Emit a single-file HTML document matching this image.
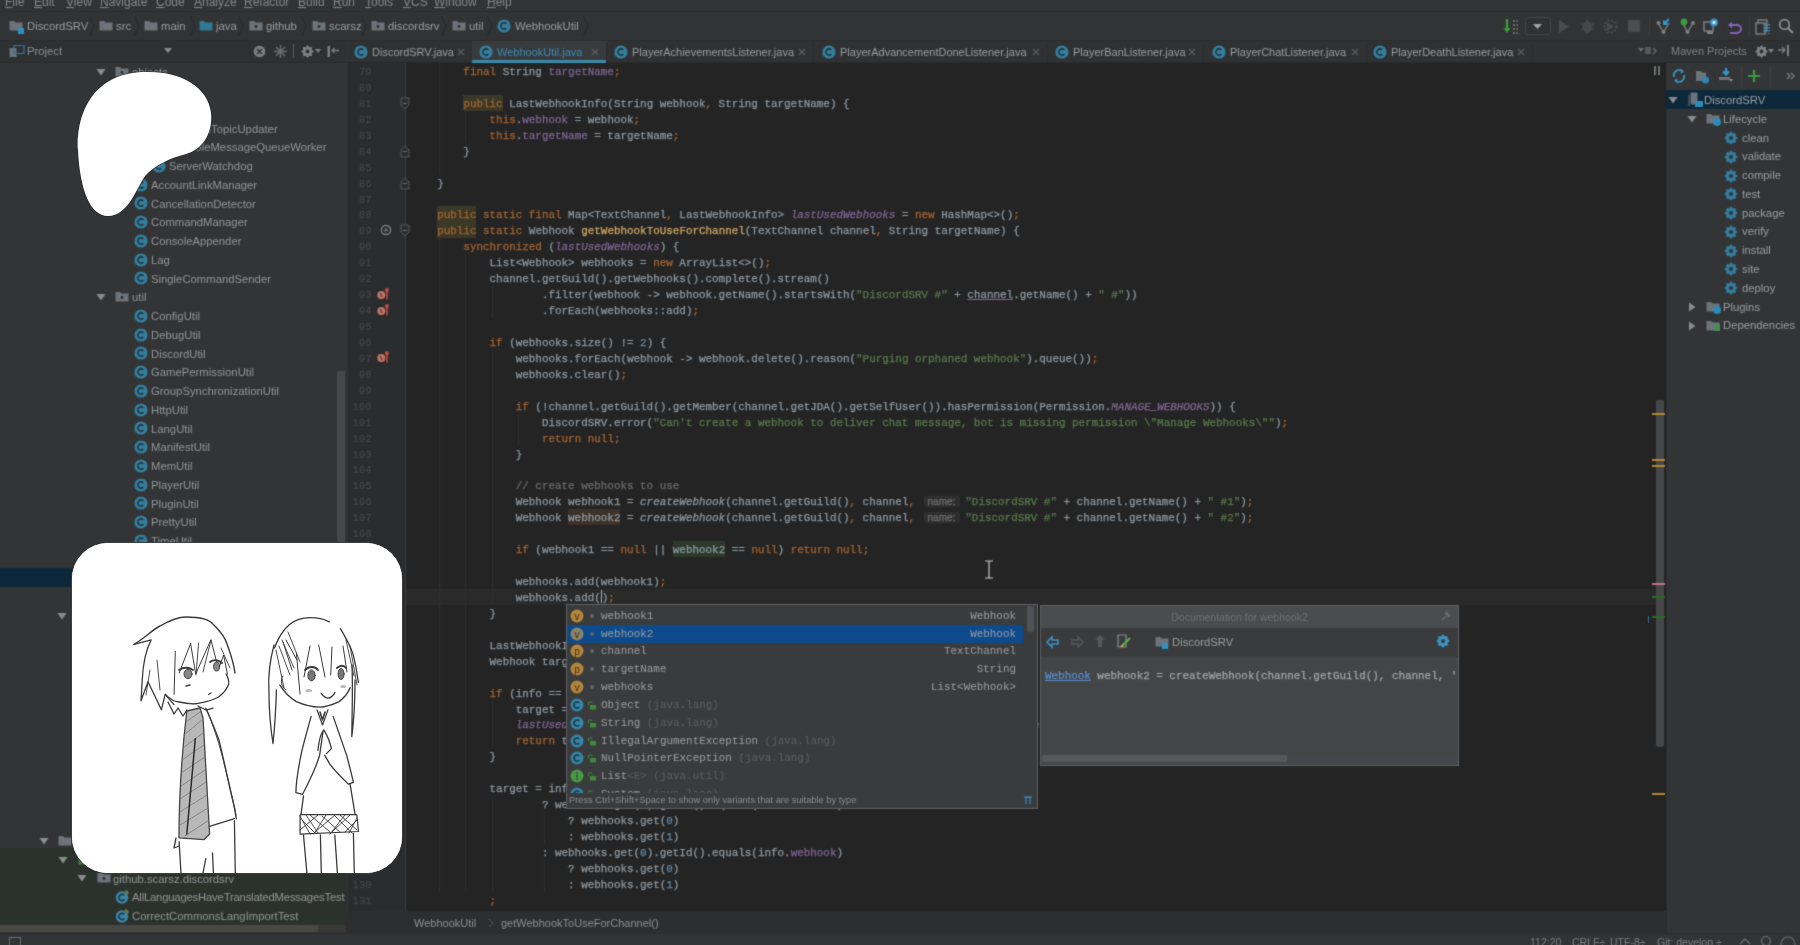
<!DOCTYPE html><html><head><meta charset="utf-8"><style>
*{margin:0;padding:0;box-sizing:border-box}
html,body{width:1800px;height:945px;overflow:hidden;background:#313335;font-family:"Liberation Sans",sans-serif;position:relative}
div,span.abs,.ic{position:absolute}
#root{position:absolute;left:0;top:0;width:1800px;height:945px;overflow:hidden;filter:url(#bl)}
#menubar{left:0;top:0;width:1800px;height:12px;background:#313335;border-bottom:1px solid #282a2b;overflow:hidden}
.mi{position:absolute;top:-5px;font-size:12px;color:#84878a;white-space:pre}
#nav{left:0;top:12px;width:1800px;height:29px;background:#313335;border-bottom:1px solid #2a2c2d}
.nt{position:absolute;top:7px;font-size:11.3px;color:#9a9da0;white-space:pre}
#projhdr{left:0;top:41px;width:346px;height:22px;background:#2e3032;border-bottom:1px solid #282a2c}
#project{left:0;top:63px;width:346px;height:870px;background:#323436;overflow:hidden}
.tr{position:absolute;font-size:11.3px;color:#9b9ea1;white-space:pre;height:19px;line-height:19px}
#tabs{left:347px;top:41px;width:1319px;height:22px;background:#2f3133;border-bottom:1px solid #27292a}
.tab{position:absolute;top:0;height:22px;font-size:11px;color:#9a9da0;white-space:pre;line-height:22px}
#gutter{left:346px;top:63px;width:61px;height:848px;background:#2b2c2e;border-left:2px solid #2f3133}
#editor{left:406px;top:63px;width:1260px;height:848px;background:#242424}
#caretrow{left:406px;top:589px;width:1250px;height:16px;background:#2a2a2a}
.ln{position:absolute;left:346px;width:25.5px;text-align:right;font-family:"Liberation Mono",monospace;font-size:10.5px;color:#46484a;height:16px;line-height:19px}
.cl{-webkit-text-stroke:0.25px currentColor;position:absolute;left:411px;font-family:"Liberation Mono",monospace;font-size:10.92px;color:#909aa2;white-space:pre;height:16px;line-height:18px}
.k{color:#a66530}
.f{color:#7f6595}
.fi{color:#7f6595;font-style:italic}
.m{color:#d3aa63}
.s{color:#597a4c}
.n{color:#5e89ab}
.c{color:#6b6b6b}
.it{font-style:italic}
.hl{background:#3a3826;display:inline-block;height:16px;vertical-align:top}
.hw{background:#3e3129;display:inline-block;height:16px;vertical-align:top}
.hr{background:#2c3a2c;display:inline-block;height:16px;vertical-align:top}
.u{text-decoration:underline;text-decoration-color:#8a5fa8}
.hint{background:#2f2f2f;color:#6b6d6f;font-family:"Liberation Sans",sans-serif;font-size:10px;padding:0 5px 0 4px;margin:0 5px 0 2px;border-radius:2px}
.caret{display:inline-block;width:1px;height:13px;background:#b0b0b0;vertical-align:-2px}
#brc{left:346px;top:911px;width:1320px;height:22px;background:#2c2e30}
#status{left:0;top:933px;width:1800px;height:12px;background:#313335;border-top:1px solid #2a2c2d}
#maven{left:1666px;top:41px;width:134px;height:892px;background:#323436;border-left:1px solid #2a2c2d}

.pt{position:absolute;font-family:"Liberation Mono",monospace;font-size:10.92px;color:#9d9fa1;white-space:pre;height:18px;line-height:19px}
.foot{position:absolute;font-size:9.3px;color:#8a8c8e;white-space:pre;line-height:13px}
.dt{position:absolute;font-size:11px;color:#6c6f72;white-space:pre;line-height:22px;height:22px}

</style></head><body><svg width="0" height="0" style="position:absolute"><filter id="bl" x="0" y="0" width="100%" height="100%" color-interpolation-filters="sRGB"><feConvolveMatrix order="3" kernelMatrix="1 4 1 4 16 4 1 4 1" divisor="36" edgeMode="duplicate"/></filter></svg><div id="root">
<div id="menubar">
<span class="mi" style="left:5px"><u>F</u>ile</span>
<span class="mi" style="left:34px"><u>E</u>dit</span>
<span class="mi" style="left:66px"><u>V</u>iew</span>
<span class="mi" style="left:100px"><u>N</u>avigate</span>
<span class="mi" style="left:156px"><u>C</u>ode</span>
<span class="mi" style="left:194px"><u>A</u>nalyze</span>
<span class="mi" style="left:244px"><u>R</u>efactor</span>
<span class="mi" style="left:298px"><u>B</u>uild</span>
<span class="mi" style="left:333px"><u>R</u>un</span>
<span class="mi" style="left:365px"><u>T</u>ools</span>
<span class="mi" style="left:403px"><u>V</u>CS</span>
<span class="mi" style="left:434px"><u>W</u>indow</span>
<span class="mi" style="left:487px"><u>H</u>elp</span>
</div>
<div id="nav"></div>
<span class="nt" style="left:27px;top:20px">DiscordSRV</span>
<svg class="ic" style="left:9px;top:20px" width="14" height="11" viewBox="0 0 14 11"><path d="M0.5,1 L5,1 L6.5,2.5 L13.5,2.5 L13.5,10.5 L0.5,10.5 Z" fill="#6d737a"/></svg>
<div style="left:18px;top:28px;width:6px;height:6px;background:#2e8fc0"></div>
<svg class="ic" style="left:89px;top:15px" width="6" height="22"><path d="M0.5,1 L5,11 L0.5,21" fill="none" stroke="#27292b" stroke-width="1"/></svg>
<span class="nt" style="left:116px;top:20px">src</span>
<svg class="ic" style="left:99px;top:20px" width="14" height="11" viewBox="0 0 14 11"><path d="M0.5,1 L5,1 L6.5,2.5 L13.5,2.5 L13.5,10.5 L0.5,10.5 Z" fill="#6d737a"/></svg>
<svg class="ic" style="left:134px;top:15px" width="6" height="22"><path d="M0.5,1 L5,11 L0.5,21" fill="none" stroke="#27292b" stroke-width="1"/></svg>
<span class="nt" style="left:161px;top:20px">main</span>
<svg class="ic" style="left:144px;top:20px" width="14" height="11" viewBox="0 0 14 11"><path d="M0.5,1 L5,1 L6.5,2.5 L13.5,2.5 L13.5,10.5 L0.5,10.5 Z" fill="#6d737a"/></svg>
<svg class="ic" style="left:190px;top:15px" width="6" height="22"><path d="M0.5,1 L5,11 L0.5,21" fill="none" stroke="#27292b" stroke-width="1"/></svg>
<span class="nt" style="left:216px;top:20px">java</span>
<svg class="ic" style="left:199px;top:20px" width="14" height="11" viewBox="0 0 14 11"><path d="M0.5,1 L5,1 L6.5,2.5 L13.5,2.5 L13.5,10.5 L0.5,10.5 Z" fill="#2f7896"/></svg>
<svg class="ic" style="left:238px;top:15px" width="6" height="22"><path d="M0.5,1 L5,11 L0.5,21" fill="none" stroke="#27292b" stroke-width="1"/></svg>
<span class="nt" style="left:266px;top:20px">github</span>
<svg class="ic" style="left:249px;top:20px" width="14" height="11" viewBox="0 0 14 11"><path d="M0.5,1 L5,1 L6.5,2.5 L13.5,2.5 L13.5,10.5 L0.5,10.5 Z" fill="#6d737a"/><circle cx="7" cy="6.5" r="1.4" fill="#2a2c2e"/></svg>
<svg class="ic" style="left:301px;top:15px" width="6" height="22"><path d="M0.5,1 L5,11 L0.5,21" fill="none" stroke="#27292b" stroke-width="1"/></svg>
<span class="nt" style="left:329px;top:20px">scarsz</span>
<svg class="ic" style="left:312px;top:20px" width="14" height="11" viewBox="0 0 14 11"><path d="M0.5,1 L5,1 L6.5,2.5 L13.5,2.5 L13.5,10.5 L0.5,10.5 Z" fill="#6d737a"/><circle cx="7" cy="6.5" r="1.4" fill="#2a2c2e"/></svg>
<svg class="ic" style="left:361px;top:15px" width="6" height="22"><path d="M0.5,1 L5,11 L0.5,21" fill="none" stroke="#27292b" stroke-width="1"/></svg>
<span class="nt" style="left:388px;top:20px">discordsrv</span>
<svg class="ic" style="left:371px;top:20px" width="14" height="11" viewBox="0 0 14 11"><path d="M0.5,1 L5,1 L6.5,2.5 L13.5,2.5 L13.5,10.5 L0.5,10.5 Z" fill="#6d737a"/><circle cx="7" cy="6.5" r="1.4" fill="#2a2c2e"/></svg>
<svg class="ic" style="left:441px;top:15px" width="6" height="22"><path d="M0.5,1 L5,11 L0.5,21" fill="none" stroke="#27292b" stroke-width="1"/></svg>
<span class="nt" style="left:469px;top:20px">util</span>
<svg class="ic" style="left:452px;top:20px" width="14" height="11" viewBox="0 0 14 11"><path d="M0.5,1 L5,1 L6.5,2.5 L13.5,2.5 L13.5,10.5 L0.5,10.5 Z" fill="#6d737a"/><circle cx="7" cy="6.5" r="1.4" fill="#2a2c2e"/></svg>
<svg class="ic" style="left:487px;top:15px" width="6" height="22"><path d="M0.5,1 L5,11 L0.5,21" fill="none" stroke="#27292b" stroke-width="1"/></svg>
<span class="nt" style="left:515px;top:20px">WebhookUtil</span>
<svg class="ic" style="left:497px;top:19px" width="14" height="14" viewBox="0 0 14 14"><circle cx="7" cy="7" r="6.6" fill="#347e9d"/><path d="M9.3,4.9 A3.1,3.1 0 1 0 9.3,9.1" fill="none" stroke="#22353f" stroke-width="1.6"/></svg>
<svg class="ic" style="left:583px;top:15px" width="6" height="22"><path d="M0.5,1 L5,11 L0.5,21" fill="none" stroke="#27292b" stroke-width="1"/></svg>
<svg class="ic" style="left:1503px;top:18px" width="16" height="17" viewBox="0 0 16 17"><path d="M4,1 L4,11" stroke="#3e9a3e" stroke-width="2.4"/><path d="M0.5,10 L4,15 L7.5,10Z" fill="#3e9a3e"/><path d="M10,3 L15,3 M10,7 L15,7 M10,11 L15,11 M10,15 L15,15" stroke="#7d8083" stroke-width="1.5" stroke-dasharray="2 1.5"/></svg>
<div style="left:1525px;top:17px;width:26px;height:18px;border:1px solid #434548;border-radius:3px;background:#2f3133"></div>
<svg class="ic" style="left:1533px;top:24px" width="9" height="6" viewBox="0 0 9 6"><path d="M0,0 L9,0 L4.5,5Z" fill="#a0a3a6"/></svg>
<svg class="ic" style="left:1558px;top:19px" width="12" height="15" viewBox="0 0 12 15"><path d="M1,1 L11,7.5 L1,14Z" fill="#4a4c4e"/></svg>
<svg class="ic" style="left:1580px;top:19px" width="15" height="15" viewBox="0 0 15 15"><ellipse cx="7.5" cy="8" rx="4.5" ry="6" fill="#47494b"/><path d="M1,5 L14,11 M14,5 L1,11 M7.5,1 L7.5,15" stroke="#47494b" stroke-width="1.4"/></svg>
<svg class="ic" style="left:1603px;top:19px" width="15" height="15" viewBox="0 0 15 15"><circle cx="7.5" cy="7.5" r="6" fill="none" stroke="#47494b" stroke-width="2.5" stroke-dasharray="2 1.5"/><path d="M4,3 L11,7.5 L4,12Z" fill="#47494b"/></svg>
<div style="left:1628px;top:20px;width:12px;height:12px;background:#4a4c4e"></div>
<div style="left:1649px;top:16px;width:1px;height:20px;background:#3c3e40"></div>
<svg class="ic" style="left:1656px;top:18px" width="15" height="17" viewBox="0 0 15 17"><path d="M2,5 L7.5,14 L13,5" fill="none" stroke="#7d8083" stroke-width="1.4"/><circle cx="2.5" cy="5" r="2" fill="#7d8083"/><circle cx="7.5" cy="14" r="2" fill="#7d8083"/><path d="M13,1 L8,6 M8,2.5 L8,6 L11.5,6" fill="none" stroke="#2f9bd0" stroke-width="2"/></svg>
<svg class="ic" style="left:1680px;top:18px" width="15" height="17" viewBox="0 0 15 17"><path d="M2.5,5 L7.5,14 L13,5" fill="none" stroke="#7d8083" stroke-width="1.4"/><circle cx="13" cy="5" r="2" fill="#7d8083"/><circle cx="7.5" cy="14" r="2" fill="#7d8083"/><circle cx="4" cy="4" r="3.4" fill="#3e9a3e"/></svg>
<svg class="ic" style="left:1703px;top:18px" width="15" height="17" viewBox="0 0 15 17"><rect x="1" y="4" width="9" height="9" fill="none" stroke="#7d8083" stroke-width="1.5"/><rect x="4" y="13" width="6" height="3" fill="#7d8083"/><circle cx="11" cy="4.5" r="4" fill="#3d92c4"/><rect x="9.5" y="3" width="3" height="3" fill="#cfe3f0"/></svg>
<svg class="ic" style="left:1727px;top:18px" width="16" height="17" viewBox="0 0 16 17"><path d="M3,7 L10,7 A4,4 0 0 1 10,15 L3,15" fill="none" stroke="#8a5fb8" stroke-width="2"/><path d="M1,7 L5,3.5 L5,10.5Z" fill="#8a5fb8"/></svg>
<div style="left:1749px;top:16px;width:1px;height:20px;background:#3c3e40"></div>
<svg class="ic" style="left:1755px;top:18px" width="16" height="17" viewBox="0 0 16 17"><rect x="3" y="2" width="9" height="11" fill="none" stroke="#7d8083" stroke-width="1.4"/><rect x="1" y="5" width="9" height="11" fill="#2f3133" stroke="#7d8083" stroke-width="1.4"/><path d="M8,7 L15,7 M8,10 L15,10 M8,13 L15,13 M11,6 L11,16 M14,6 L14,16" stroke="#2f9bd0" stroke-width="1.2" stroke-dasharray="1.5 1.5"/></svg>
<svg class="ic" style="left:1778px;top:18px" width="16" height="17" viewBox="0 0 16 17"><circle cx="6.5" cy="6.5" r="4.8" fill="none" stroke="#8a8d90" stroke-width="1.8"/><path d="M10,10 L15,15" stroke="#8a8d90" stroke-width="2.2"/></svg>
<div id="projhdr"></div>
<span class="tr" style="left:27px;top:42px;color:#8d9093">Project</span>
<svg class="ic" style="left:9px;top:45px" width="16" height="13" viewBox="0 0 16 13"><rect x="0.5" y="3" width="7" height="9" fill="#6d737a"/><rect x="5" y="0.5" width="10" height="8" fill="none" stroke="#2f7896" stroke-width="1.2"/></svg>
<svg class="ic" style="left:164px;top:48px" width="8" height="5" viewBox="0 0 8 5"><path d="M0,0 L8,0 L4,5Z" fill="#8a8c8e"/></svg>
<svg class="ic" style="left:253px;top:45px" width="13" height="13" viewBox="0 0 13 13"><circle cx="6.5" cy="6.5" r="5.8" fill="#7d8083"/><path d="M4,4 L9,9 M9,4 L4,9" stroke="#2e3032" stroke-width="1.6"/></svg>
<svg class="ic" style="left:274px;top:45px" width="13" height="13" viewBox="0 0 13 13"><path d="M6.5,0 L6.5,13 M0,6.5 L13,6.5 M2,2 L11,11 M11,2 L2,11" stroke="#6d7073" stroke-width="1.4"/></svg>
<div style="left:293px;top:44px;width:1px;height:14px;background:#5a5d60"></div>
<svg class="ic" style="left:300.5px;top:44.5px" width="13.0" height="13.0" viewBox="0 0 13.0 13.0"><polygon points="12.00,6.50 10.16,8.02 10.39,10.39 8.02,10.16 6.50,12.00 4.98,10.16 2.61,10.39 2.84,8.02 1.00,6.50 2.84,4.98 2.61,2.61 4.98,2.84 6.50,1.00 8.02,2.84 10.39,2.61 10.16,4.98" fill="#7d8083" stroke="#7d8083" stroke-width="1.2" stroke-linejoin="round"/><circle cx="6.5" cy="6.5" r="1.92" fill="#2e3032"/></svg>
<svg class="ic" style="left:315px;top:49px" width="6" height="5" viewBox="0 0 6 5"><path d="M0,0 L6,0 L3,4Z" fill="#7d8083"/></svg>
<svg class="ic" style="left:327px;top:45px" width="13" height="13" viewBox="0 0 13 13"><rect x="0.5" y="1" width="2.5" height="11" fill="#7d8083"/><path d="M5,5.5 L12,5.5" stroke="#7d8083" stroke-width="1.5"/><path d="M5,5.5 L7.5,3 M5,5.5 L7.5,8" stroke="#7d8083" stroke-width="1.2"/></svg>
<div id="project"></div>
<div style="left:0;top:568px;width:346px;height:19px;background:#0d283b"></div>
<div style="left:0;top:848px;width:346px;height:77px;background:#2b322c"></div>
<div style="left:0;top:925px;width:346px;height:7px;background:#4a4844"></div>
<div style="left:318px;top:925px;width:28px;height:7px;background:#3a3936"></div>
<div style="left:337px;top:371px;width:8px;height:175px;background:#45474a"></div>
<svg class="ic" style="left:96px;top:68.0px" width="10" height="8" viewBox="0 0 10 8"><path d="M0.5,1 L9.5,1 L5,7.5 Z" fill="#8a8c8e"/></svg>
<svg class="ic" style="left:115px;top:66.0px" width="14" height="11" viewBox="0 0 14 11"><path d="M0.5,1 L5,1 L6.5,2.5 L13.5,2.5 L13.5,10.5 L0.5,10.5 Z" fill="#6d737a"/><circle cx="7" cy="6.5" r="1.4" fill="#2a2c2e"/></svg>
<span class="tr" style="left:132px;top:63.3px;color:#929598">objects</span>
<svg class="ic" style="left:116px;top:86.75px" width="10" height="8" viewBox="0 0 10 8"><path d="M0.5,1 L9.5,1 L5,7.5 Z" fill="#8a8c8e"/></svg>
<svg class="ic" style="left:134px;top:84.75px" width="14" height="11" viewBox="0 0 14 11"><path d="M0.5,1 L5,1 L6.5,2.5 L13.5,2.5 L13.5,10.5 L0.5,10.5 Z" fill="#6d737a"/><circle cx="7" cy="6.5" r="1.4" fill="#2a2c2e"/></svg>
<span class="tr" style="left:150px;top:82.0px;color:#929598">threads</span>
<svg class="ic" style="left:152px;top:102.5px" width="14" height="14" viewBox="0 0 14 14"><circle cx="7" cy="7" r="6.6" fill="#347e9d"/><path d="M9.3,4.9 A3.1,3.1 0 1 0 9.3,9.1" fill="none" stroke="#22353f" stroke-width="1.6"/></svg>
<svg class="ic" style="left:152px;top:121.25px" width="14" height="14" viewBox="0 0 14 14"><circle cx="7" cy="7" r="6.6" fill="#347e9d"/><path d="M9.3,4.9 A3.1,3.1 0 1 0 9.3,9.1" fill="none" stroke="#22353f" stroke-width="1.6"/></svg>
<span class="tr" style="left:169px;top:119.5px;color:#929598">ChannelTopicUpdater</span>
<svg class="ic" style="left:152px;top:140.0px" width="14" height="14" viewBox="0 0 14 14"><circle cx="7" cy="7" r="6.6" fill="#347e9d"/><path d="M9.3,4.9 A3.1,3.1 0 1 0 9.3,9.1" fill="none" stroke="#22353f" stroke-width="1.6"/></svg>
<span class="tr" style="left:169px;top:138.3px;color:#929598">ConsoleMessageQueueWorker</span>
<svg class="ic" style="left:152px;top:158.75px" width="14" height="14" viewBox="0 0 14 14"><circle cx="7" cy="7" r="6.6" fill="#347e9d"/><path d="M9.3,4.9 A3.1,3.1 0 1 0 9.3,9.1" fill="none" stroke="#22353f" stroke-width="1.6"/></svg>
<span class="tr" style="left:169px;top:157.1px;color:#929598">ServerWatchdog</span>
<svg class="ic" style="left:134px;top:177.5px" width="14" height="14" viewBox="0 0 14 14"><circle cx="7" cy="7" r="6.6" fill="#347e9d"/><path d="M9.3,4.9 A3.1,3.1 0 1 0 9.3,9.1" fill="none" stroke="#22353f" stroke-width="1.6"/></svg>
<span class="tr" style="left:151px;top:175.8px;color:#929598">AccountLinkManager</span>
<svg class="ic" style="left:134px;top:196.25px" width="14" height="14" viewBox="0 0 14 14"><circle cx="7" cy="7" r="6.6" fill="#347e9d"/><path d="M9.3,4.9 A3.1,3.1 0 1 0 9.3,9.1" fill="none" stroke="#22353f" stroke-width="1.6"/></svg>
<span class="tr" style="left:151px;top:194.6px;color:#929598">CancellationDetector</span>
<svg class="ic" style="left:134px;top:215.0px" width="14" height="14" viewBox="0 0 14 14"><circle cx="7" cy="7" r="6.6" fill="#347e9d"/><path d="M9.3,4.9 A3.1,3.1 0 1 0 9.3,9.1" fill="none" stroke="#22353f" stroke-width="1.6"/></svg>
<span class="tr" style="left:151px;top:213.3px;color:#929598">CommandManager</span>
<svg class="ic" style="left:134px;top:233.75px" width="14" height="14" viewBox="0 0 14 14"><circle cx="7" cy="7" r="6.6" fill="#347e9d"/><path d="M9.3,4.9 A3.1,3.1 0 1 0 9.3,9.1" fill="none" stroke="#22353f" stroke-width="1.6"/></svg>
<span class="tr" style="left:151px;top:232.1px;color:#929598">ConsoleAppender</span>
<svg class="ic" style="left:134px;top:252.5px" width="14" height="14" viewBox="0 0 14 14"><circle cx="7" cy="7" r="6.6" fill="#347e9d"/><path d="M9.3,4.9 A3.1,3.1 0 1 0 9.3,9.1" fill="none" stroke="#22353f" stroke-width="1.6"/></svg>
<span class="tr" style="left:151px;top:250.8px;color:#929598">Lag</span>
<svg class="ic" style="left:134px;top:271.25px" width="14" height="14" viewBox="0 0 14 14"><circle cx="7" cy="7" r="6.6" fill="#347e9d"/><path d="M9.3,4.9 A3.1,3.1 0 1 0 9.3,9.1" fill="none" stroke="#22353f" stroke-width="1.6"/></svg>
<span class="tr" style="left:151px;top:269.6px;color:#929598">SingleCommandSender</span>
<svg class="ic" style="left:96px;top:293.0px" width="10" height="8" viewBox="0 0 10 8"><path d="M0.5,1 L9.5,1 L5,7.5 Z" fill="#8a8c8e"/></svg>
<svg class="ic" style="left:115px;top:291.0px" width="14" height="11" viewBox="0 0 14 11"><path d="M0.5,1 L5,1 L6.5,2.5 L13.5,2.5 L13.5,10.5 L0.5,10.5 Z" fill="#6d737a"/><circle cx="7" cy="6.5" r="1.4" fill="#2a2c2e"/></svg>
<span class="tr" style="left:132px;top:288.3px;color:#929598">util</span>
<svg class="ic" style="left:134px;top:308.75px" width="14" height="14" viewBox="0 0 14 14"><circle cx="7" cy="7" r="6.6" fill="#347e9d"/><path d="M9.3,4.9 A3.1,3.1 0 1 0 9.3,9.1" fill="none" stroke="#22353f" stroke-width="1.6"/></svg>
<span class="tr" style="left:151px;top:307.1px;color:#929598">ConfigUtil</span>
<svg class="ic" style="left:134px;top:327.5px" width="14" height="14" viewBox="0 0 14 14"><circle cx="7" cy="7" r="6.6" fill="#347e9d"/><path d="M9.3,4.9 A3.1,3.1 0 1 0 9.3,9.1" fill="none" stroke="#22353f" stroke-width="1.6"/></svg>
<span class="tr" style="left:151px;top:325.8px;color:#929598">DebugUtil</span>
<svg class="ic" style="left:134px;top:346.25px" width="14" height="14" viewBox="0 0 14 14"><circle cx="7" cy="7" r="6.6" fill="#347e9d"/><path d="M9.3,4.9 A3.1,3.1 0 1 0 9.3,9.1" fill="none" stroke="#22353f" stroke-width="1.6"/></svg>
<span class="tr" style="left:151px;top:344.6px;color:#929598">DiscordUtil</span>
<svg class="ic" style="left:134px;top:365.0px" width="14" height="14" viewBox="0 0 14 14"><circle cx="7" cy="7" r="6.6" fill="#347e9d"/><path d="M9.3,4.9 A3.1,3.1 0 1 0 9.3,9.1" fill="none" stroke="#22353f" stroke-width="1.6"/></svg>
<span class="tr" style="left:151px;top:363.3px;color:#929598">GamePermissionUtil</span>
<svg class="ic" style="left:134px;top:383.75px" width="14" height="14" viewBox="0 0 14 14"><circle cx="7" cy="7" r="6.6" fill="#347e9d"/><path d="M9.3,4.9 A3.1,3.1 0 1 0 9.3,9.1" fill="none" stroke="#22353f" stroke-width="1.6"/></svg>
<span class="tr" style="left:151px;top:382.1px;color:#929598">GroupSynchronizationUtil</span>
<svg class="ic" style="left:134px;top:402.5px" width="14" height="14" viewBox="0 0 14 14"><circle cx="7" cy="7" r="6.6" fill="#347e9d"/><path d="M9.3,4.9 A3.1,3.1 0 1 0 9.3,9.1" fill="none" stroke="#22353f" stroke-width="1.6"/></svg>
<span class="tr" style="left:151px;top:400.8px;color:#929598">HttpUtil</span>
<svg class="ic" style="left:134px;top:421.25px" width="14" height="14" viewBox="0 0 14 14"><circle cx="7" cy="7" r="6.6" fill="#347e9d"/><path d="M9.3,4.9 A3.1,3.1 0 1 0 9.3,9.1" fill="none" stroke="#22353f" stroke-width="1.6"/></svg>
<span class="tr" style="left:151px;top:419.6px;color:#929598">LangUtil</span>
<svg class="ic" style="left:134px;top:440.0px" width="14" height="14" viewBox="0 0 14 14"><circle cx="7" cy="7" r="6.6" fill="#347e9d"/><path d="M9.3,4.9 A3.1,3.1 0 1 0 9.3,9.1" fill="none" stroke="#22353f" stroke-width="1.6"/></svg>
<span class="tr" style="left:151px;top:438.3px;color:#929598">ManifestUtil</span>
<svg class="ic" style="left:134px;top:458.75px" width="14" height="14" viewBox="0 0 14 14"><circle cx="7" cy="7" r="6.6" fill="#347e9d"/><path d="M9.3,4.9 A3.1,3.1 0 1 0 9.3,9.1" fill="none" stroke="#22353f" stroke-width="1.6"/></svg>
<span class="tr" style="left:151px;top:457.1px;color:#929598">MemUtil</span>
<svg class="ic" style="left:134px;top:477.5px" width="14" height="14" viewBox="0 0 14 14"><circle cx="7" cy="7" r="6.6" fill="#347e9d"/><path d="M9.3,4.9 A3.1,3.1 0 1 0 9.3,9.1" fill="none" stroke="#22353f" stroke-width="1.6"/></svg>
<span class="tr" style="left:151px;top:475.8px;color:#929598">PlayerUtil</span>
<svg class="ic" style="left:134px;top:496.25px" width="14" height="14" viewBox="0 0 14 14"><circle cx="7" cy="7" r="6.6" fill="#347e9d"/><path d="M9.3,4.9 A3.1,3.1 0 1 0 9.3,9.1" fill="none" stroke="#22353f" stroke-width="1.6"/></svg>
<span class="tr" style="left:151px;top:494.6px;color:#929598">PluginUtil</span>
<svg class="ic" style="left:134px;top:515.0px" width="14" height="14" viewBox="0 0 14 14"><circle cx="7" cy="7" r="6.6" fill="#347e9d"/><path d="M9.3,4.9 A3.1,3.1 0 1 0 9.3,9.1" fill="none" stroke="#22353f" stroke-width="1.6"/></svg>
<span class="tr" style="left:151px;top:513.3px;color:#929598">PrettyUtil</span>
<svg class="ic" style="left:134px;top:533.75px" width="14" height="14" viewBox="0 0 14 14"><circle cx="7" cy="7" r="6.6" fill="#347e9d"/><path d="M9.3,4.9 A3.1,3.1 0 1 0 9.3,9.1" fill="none" stroke="#22353f" stroke-width="1.6"/></svg>
<span class="tr" style="left:151px;top:532.0px;color:#929598">TimeUtil</span>
<svg class="ic" style="left:134px;top:552.5px" width="14" height="14" viewBox="0 0 14 14"><circle cx="7" cy="7" r="6.6" fill="#347e9d"/><path d="M9.3,4.9 A3.1,3.1 0 1 0 9.3,9.1" fill="none" stroke="#22353f" stroke-width="1.6"/></svg>
<span class="tr" style="left:151px;top:550.8px;color:#929598">UpdateUtil</span>
<svg class="ic" style="left:134px;top:571.25px" width="14" height="14" viewBox="0 0 14 14"><circle cx="7" cy="7" r="6.6" fill="#347e9d"/><path d="M9.3,4.9 A3.1,3.1 0 1 0 9.3,9.1" fill="none" stroke="#22353f" stroke-width="1.6"/></svg>
<span class="tr" style="left:151px;top:569.5px;color:#929598">WebhookUtil</span>
<svg class="ic" style="left:115px;top:590.0px" width="14" height="14" viewBox="0 0 14 14"><circle cx="7" cy="7" r="6.6" fill="#347e9d"/><path d="M9.3,4.9 A3.1,3.1 0 1 0 9.3,9.1" fill="none" stroke="#22353f" stroke-width="1.6"/></svg>
<span class="tr" style="left:132px;top:588.3px;color:#929598">DiscordSRV</span>
<svg class="ic" style="left:57px;top:611.75px" width="10" height="8" viewBox="0 0 10 8"><path d="M0.5,1 L9.5,1 L5,7.5 Z" fill="#8a8c8e"/></svg>
<svg class="ic" style="left:76px;top:609.75px" width="14" height="11" viewBox="0 0 14 11"><path d="M0.5,1 L5,1 L6.5,2.5 L13.5,2.5 L13.5,10.5 L0.5,10.5 Z" fill="#6d737a"/></svg>
<span class="tr" style="left:93px;top:607.0px;color:#929598">resources</span>
<svg class="ic" style="left:39px;top:836.75px" width="10" height="8" viewBox="0 0 10 8"><path d="M0.5,1 L9.5,1 L5,7.5 Z" fill="#8a8c8e"/></svg>
<svg class="ic" style="left:58px;top:834.75px" width="14" height="11" viewBox="0 0 14 11"><path d="M0.5,1 L5,1 L6.5,2.5 L13.5,2.5 L13.5,10.5 L0.5,10.5 Z" fill="#6d737a"/></svg>
<span class="tr" style="left:76px;top:832.0px;color:#929598">test</span>
<svg class="ic" style="left:58px;top:855.5px" width="10" height="8" viewBox="0 0 10 8"><path d="M0.5,1 L9.5,1 L5,7.5 Z" fill="#8a8c8e"/></svg>
<svg class="ic" style="left:78px;top:853.5px" width="14" height="11" viewBox="0 0 14 11"><path d="M0.5,1 L5,1 L6.5,2.5 L13.5,2.5 L13.5,10.5 L0.5,10.5 Z" fill="#3f8a3f"/></svg>
<span class="tr" style="left:95px;top:850.8px;color:#929598">java</span>
<svg class="ic" style="left:77px;top:874.25px" width="10" height="8" viewBox="0 0 10 8"><path d="M0.5,1 L9.5,1 L5,7.5 Z" fill="#8a8c8e"/></svg>
<svg class="ic" style="left:97px;top:872.25px" width="14" height="11" viewBox="0 0 14 11"><path d="M0.5,1 L5,1 L6.5,2.5 L13.5,2.5 L13.5,10.5 L0.5,10.5 Z" fill="#6d737a"/><circle cx="7" cy="6.5" r="1.4" fill="#2a2c2e"/></svg>
<span class="tr" style="left:113px;top:869.5px;color:#929598">github.scarsz.discordsrv</span>
<svg class="ic" style="left:115px;top:890.0px" width="14" height="14" viewBox="0 0 14 14"><circle cx="7" cy="7.5" r="6.2" fill="#3a86a5"/><path d="M9.3,5.4 A3.1,3.1 0 1 0 9.3,9.6" fill="none" stroke="#22353f" stroke-width="1.6"/><path d="M9,1 L13,1 L13,5 Z" fill="#b0502f"/><path d="M10.5,0.5 L13.5,3.5" stroke="#4a9a3a" stroke-width="1.4"/></svg>
<span class="tr" style="left:132px;top:888.3px;color:#929598"><span style="letter-spacing:-0.2px">AllLanguagesHaveTranslatedMessagesTest</span></span>
<svg class="ic" style="left:115px;top:908.75px" width="14" height="14" viewBox="0 0 14 14"><circle cx="7" cy="7.5" r="6.2" fill="#3a86a5"/><path d="M9.3,5.4 A3.1,3.1 0 1 0 9.3,9.6" fill="none" stroke="#22353f" stroke-width="1.6"/><path d="M9,1 L13,1 L13,5 Z" fill="#b0502f"/><path d="M10.5,0.5 L13.5,3.5" stroke="#4a9a3a" stroke-width="1.4"/></svg>
<span class="tr" style="left:132px;top:907.0px;color:#929598">CorrectCommonsLangImportTest</span>
<div id="tabs"></div>
<div style="left:472px;top:43px;width:1px;height:19px;background:#2a2c2e"></div>
<svg class="ic" style="left:354px;top:45px" width="14" height="14" viewBox="0 0 14 14"><circle cx="7" cy="7" r="6.6" fill="#347e9d"/><path d="M9.3,4.9 A3.1,3.1 0 1 0 9.3,9.1" fill="none" stroke="#22353f" stroke-width="1.6"/></svg>
<span class="tab" style="left:372px;top:41px;color:#9a9da0">DiscordSRV.java</span>
<svg class="ic" style="left:457px;top:48px" width="8" height="8" viewBox="0 0 8 8"><path d="M1,1 L7,7 M7,1 L1,7" stroke="#5d6063" stroke-width="1.1"/></svg>
<div style="left:472px;top:41px;width:134px;height:22px;background:#383b3d"></div>
<div style="left:472px;top:60px;width:134px;height:3px;background:#3a8cab"></div>
<div style="left:606px;top:43px;width:1px;height:19px;background:#2a2c2e"></div>
<svg class="ic" style="left:479px;top:45px" width="14" height="14" viewBox="0 0 14 14"><circle cx="7" cy="7" r="6.6" fill="#347e9d"/><path d="M9.3,4.9 A3.1,3.1 0 1 0 9.3,9.1" fill="none" stroke="#22353f" stroke-width="1.6"/></svg>
<span class="tab" style="left:497px;top:41px;color:#3c89b0">WebhookUtil.java</span>
<svg class="ic" style="left:591px;top:48px" width="8" height="8" viewBox="0 0 8 8"><path d="M1,1 L7,7 M7,1 L1,7" stroke="#5d6063" stroke-width="1.1"/></svg>
<div style="left:813px;top:43px;width:1px;height:19px;background:#2a2c2e"></div>
<svg class="ic" style="left:614px;top:45px" width="14" height="14" viewBox="0 0 14 14"><circle cx="7" cy="7" r="6.6" fill="#347e9d"/><path d="M9.3,4.9 A3.1,3.1 0 1 0 9.3,9.1" fill="none" stroke="#22353f" stroke-width="1.6"/></svg>
<span class="tab" style="left:632px;top:41px;color:#9a9da0">PlayerAchievementsListener.java</span>
<svg class="ic" style="left:798px;top:48px" width="8" height="8" viewBox="0 0 8 8"><path d="M1,1 L7,7 M7,1 L1,7" stroke="#5d6063" stroke-width="1.1"/></svg>
<div style="left:1047px;top:43px;width:1px;height:19px;background:#2a2c2e"></div>
<svg class="ic" style="left:822px;top:45px" width="14" height="14" viewBox="0 0 14 14"><circle cx="7" cy="7" r="6.6" fill="#347e9d"/><path d="M9.3,4.9 A3.1,3.1 0 1 0 9.3,9.1" fill="none" stroke="#22353f" stroke-width="1.6"/></svg>
<span class="tab" style="left:840px;top:41px;color:#9a9da0">PlayerAdvancementDoneListener.java</span>
<svg class="ic" style="left:1032px;top:48px" width="8" height="8" viewBox="0 0 8 8"><path d="M1,1 L7,7 M7,1 L1,7" stroke="#5d6063" stroke-width="1.1"/></svg>
<div style="left:1203px;top:43px;width:1px;height:19px;background:#2a2c2e"></div>
<svg class="ic" style="left:1055px;top:45px" width="14" height="14" viewBox="0 0 14 14"><circle cx="7" cy="7" r="6.6" fill="#347e9d"/><path d="M9.3,4.9 A3.1,3.1 0 1 0 9.3,9.1" fill="none" stroke="#22353f" stroke-width="1.6"/></svg>
<span class="tab" style="left:1073px;top:41px;color:#9a9da0">PlayerBanListener.java</span>
<svg class="ic" style="left:1188px;top:48px" width="8" height="8" viewBox="0 0 8 8"><path d="M1,1 L7,7 M7,1 L1,7" stroke="#5d6063" stroke-width="1.1"/></svg>
<div style="left:1366px;top:43px;width:1px;height:19px;background:#2a2c2e"></div>
<svg class="ic" style="left:1212px;top:45px" width="14" height="14" viewBox="0 0 14 14"><circle cx="7" cy="7" r="6.6" fill="#347e9d"/><path d="M9.3,4.9 A3.1,3.1 0 1 0 9.3,9.1" fill="none" stroke="#22353f" stroke-width="1.6"/></svg>
<span class="tab" style="left:1230px;top:41px;color:#9a9da0">PlayerChatListener.java</span>
<svg class="ic" style="left:1351px;top:48px" width="8" height="8" viewBox="0 0 8 8"><path d="M1,1 L7,7 M7,1 L1,7" stroke="#5d6063" stroke-width="1.1"/></svg>
<div style="left:1532px;top:43px;width:1px;height:19px;background:#2a2c2e"></div>
<svg class="ic" style="left:1373px;top:45px" width="14" height="14" viewBox="0 0 14 14"><circle cx="7" cy="7" r="6.6" fill="#347e9d"/><path d="M9.3,4.9 A3.1,3.1 0 1 0 9.3,9.1" fill="none" stroke="#22353f" stroke-width="1.6"/></svg>
<span class="tab" style="left:1391px;top:41px;color:#9a9da0">PlayerDeathListener.java</span>
<svg class="ic" style="left:1517px;top:48px" width="8" height="8" viewBox="0 0 8 8"><path d="M1,1 L7,7 M7,1 L1,7" stroke="#5d6063" stroke-width="1.1"/></svg>
<svg class="ic" style="left:1638px;top:48px" width="9" height="5" viewBox="0 0 9 5"><path d="M0,0 L6,0 L3,4Z" fill="#6d7073"/></svg>
<div style="left:1645px;top:47px;width:6px;height:7px;background:#55585b"></div>
<svg class="ic" style="left:1652px;top:47px" width="5" height="8" viewBox="0 0 5 8"><path d="M1,1 L4,4 L1,7" fill="none" stroke="#6d7073" stroke-width="1.1"/></svg>
<div id="gutter"></div><div id="editor"></div>
<div id="caretrow"></div>
<div style="left:439.2px;top:63.0px;width:1px;height:111.6px;background:#2f2f2f"></div>
<div style="left:465.4px;top:110.8px;width:1px;height:31.9px;background:#2f2f2f"></div>
<div style="left:439.2px;top:238.3px;width:1px;height:653.4px;background:#2f2f2f"></div>
<div style="left:465.4px;top:254.2px;width:1px;height:637.5px;background:#2f2f2f"></div>
<div style="left:491.6px;top:286.1px;width:1px;height:31.9px;background:#2f2f2f"></div>
<div style="left:491.6px;top:349.9px;width:1px;height:255.0px;background:#2f2f2f"></div>
<div style="left:517.8px;top:413.6px;width:1px;height:31.9px;background:#2f2f2f"></div>
<div style="left:491.6px;top:700.5px;width:1px;height:47.8px;background:#2f2f2f"></div>
<div style="left:491.6px;top:796.1px;width:1px;height:95.6px;background:#2f2f2f"></div>
<div style="left:544.0px;top:812.1px;width:1px;height:31.9px;background:#2f2f2f"></div>
<div style="left:544.0px;top:859.9px;width:1px;height:31.9px;background:#2f2f2f"></div>
<div style="left:405px;top:63px;width:1px;height:848px;background:#3b3c3e"></div>
<svg class="ic" style="left:400px;top:96.875px" width="10" height="13" viewBox="0 0 10 13"><path d="M1,1 L9,1 L9,8 L5,12 L1,8 Z" fill="#2b2c2e" stroke="#55585b" stroke-width="1"/><path d="M3,6.5 L7,6.5" stroke="#6a6d70" stroke-width="1"/></svg>
<svg class="ic" style="left:400px;top:144.6875px" width="10" height="13" viewBox="0 0 10 13"><path d="M1,12 L9,12 L9,5 L5,1 L1,5 Z" fill="#2b2c2e" stroke="#55585b" stroke-width="1"/><path d="M3,6.5 L7,6.5" stroke="#6a6d70" stroke-width="1"/></svg>
<svg class="ic" style="left:400px;top:176.5625px" width="10" height="13" viewBox="0 0 10 13"><path d="M1,12 L9,12 L9,5 L5,1 L1,5 Z" fill="#2b2c2e" stroke="#55585b" stroke-width="1"/><path d="M3,6.5 L7,6.5" stroke="#6a6d70" stroke-width="1"/></svg>
<svg class="ic" style="left:400px;top:224.375px" width="10" height="13" viewBox="0 0 10 13"><path d="M1,1 L9,1 L9,8 L5,12 L1,8 Z" fill="#2b2c2e" stroke="#55585b" stroke-width="1"/><path d="M3,6.5 L7,6.5" stroke="#6a6d70" stroke-width="1"/></svg>
<svg class="ic" style="left:380px;top:224.375px" width="12" height="12" viewBox="0 0 12 12"><circle cx="6" cy="6" r="4.6" fill="none" stroke="#7a7c7e" stroke-width="1.5"/><circle cx="6" cy="6" r="1.6" fill="#7a7c7e"/></svg>
<svg class="ic" style="left:375px;top:286.625px" width="16" height="16" viewBox="0 0 16 16"><circle cx="6.3" cy="8" r="4" fill="#c07468"/><path d="M5.5,6 L7,10" stroke="#3a2a28" stroke-width="1"/><rect x="11" y="3" width="1.8" height="9.5" fill="#a8483c"/><circle cx="11.9" cy="3" r="2" fill="#c25040"/></svg>
<svg class="ic" style="left:375px;top:302.5625px" width="16" height="16" viewBox="0 0 16 16"><circle cx="6.3" cy="8" r="4" fill="#c07468"/><path d="M5.5,6 L7,10" stroke="#3a2a28" stroke-width="1"/><rect x="11" y="3" width="1.8" height="9.5" fill="#a8483c"/><circle cx="11.9" cy="3" r="2" fill="#c25040"/></svg>
<svg class="ic" style="left:375px;top:350.375px" width="16" height="16" viewBox="0 0 16 16"><circle cx="6.3" cy="8" r="4" fill="#c07468"/><path d="M5.5,6 L7,10" stroke="#3a2a28" stroke-width="1"/><rect x="11" y="3" width="1.8" height="9.5" fill="#a8483c"/><circle cx="11.9" cy="3" r="2" fill="#c25040"/></svg>
<div class="ln" style="top:63.00px">79</div>
<div class="ln" style="top:78.94px">80</div>
<div class="ln" style="top:94.88px">81</div>
<div class="ln" style="top:110.81px">82</div>
<div class="ln" style="top:126.75px">83</div>
<div class="ln" style="top:142.69px">84</div>
<div class="ln" style="top:158.62px">85</div>
<div class="ln" style="top:174.56px">86</div>
<div class="ln" style="top:190.50px">87</div>
<div class="ln" style="top:206.44px">88</div>
<div class="ln" style="top:222.38px">89</div>
<div class="ln" style="top:238.31px">90</div>
<div class="ln" style="top:254.25px">91</div>
<div class="ln" style="top:270.19px">92</div>
<div class="ln" style="top:286.12px">93</div>
<div class="ln" style="top:302.06px">94</div>
<div class="ln" style="top:318.00px">95</div>
<div class="ln" style="top:333.94px">96</div>
<div class="ln" style="top:349.88px">97</div>
<div class="ln" style="top:365.81px">98</div>
<div class="ln" style="top:381.75px">99</div>
<div class="ln" style="top:397.69px">100</div>
<div class="ln" style="top:413.62px">101</div>
<div class="ln" style="top:429.56px">102</div>
<div class="ln" style="top:445.50px">103</div>
<div class="ln" style="top:461.44px">104</div>
<div class="ln" style="top:477.38px">105</div>
<div class="ln" style="top:493.31px">106</div>
<div class="ln" style="top:509.25px">107</div>
<div class="ln" style="top:525.19px">108</div>
<div class="ln" style="top:541.12px">109</div>
<div class="ln" style="top:557.06px">110</div>
<div class="ln" style="top:573.00px">111</div>
<div class="ln" style="top:588.94px">112</div>
<div class="ln" style="top:604.88px">113</div>
<div class="ln" style="top:620.81px">114</div>
<div class="ln" style="top:636.75px">115</div>
<div class="ln" style="top:652.69px">116</div>
<div class="ln" style="top:668.62px">117</div>
<div class="ln" style="top:684.56px">118</div>
<div class="ln" style="top:700.50px">119</div>
<div class="ln" style="top:716.44px">120</div>
<div class="ln" style="top:732.38px">121</div>
<div class="ln" style="top:748.31px">122</div>
<div class="ln" style="top:764.25px">123</div>
<div class="ln" style="top:780.19px">124</div>
<div class="ln" style="top:796.12px">125</div>
<div class="ln" style="top:812.06px">126</div>
<div class="ln" style="top:828.00px">127</div>
<div class="ln" style="top:843.94px">128</div>
<div class="ln" style="top:859.88px">129</div>
<div class="ln" style="top:875.81px">130</div>
<div class="ln" style="top:891.75px">131</div>
<div class="cl" style="top:63.00px">        <span class="k">final</span> String <span class="f">targetName</span><span class="k">;</span></div>
<div class="cl" style="top:94.88px">        <span class="hl"><span class="k">public</span></span> LastWebhookInfo(String webhook<span class="k">,</span> String targetName) {</div>
<div class="cl" style="top:110.81px">            <span class="k">this</span>.<span class="f">webhook</span> = webhook<span class="k">;</span></div>
<div class="cl" style="top:126.75px">            <span class="k">this</span>.<span class="f">targetName</span> = targetName<span class="k">;</span></div>
<div class="cl" style="top:142.69px">        }</div>
<div class="cl" style="top:174.56px">    }</div>
<div class="cl" style="top:206.44px">    <span class="hl"><span class="k">public</span></span> <span class="k">static final</span> Map&lt;TextChannel<span class="k">,</span> LastWebhookInfo&gt; <span class="fi">lastUsedWebhooks</span> = <span class="k">new</span> HashMap&lt;&gt;()<span class="k">;</span></div>
<div class="cl" style="top:222.38px">    <span class="hl"><span class="k">public</span></span> <span class="k">static</span> Webhook <span class="m">getWebhookToUseForChannel</span>(TextChannel channel<span class="k">,</span> String targetName) {</div>
<div class="cl" style="top:238.31px">        <span class="k">synchronized</span> (<span class="fi">lastUsedWebhooks</span>) {</div>
<div class="cl" style="top:254.25px">            List&lt;Webhook&gt; webhooks = <span class="k">new</span> ArrayList&lt;&gt;()<span class="k">;</span></div>
<div class="cl" style="top:270.19px">            channel.getGuild().getWebhooks().complete().stream()</div>
<div class="cl" style="top:286.12px">                    .filter(webhook -&gt; webhook.getName().startsWith(<span class="s">"DiscordSRV #"</span> + <span class="u">channel</span>.getName() + <span class="s">" #"</span>))</div>
<div class="cl" style="top:302.06px">                    .forEach(webhooks::add)<span class="k">;</span></div>
<div class="cl" style="top:333.94px">            <span class="k">if</span> (webhooks.size() != <span class="n">2</span>) {</div>
<div class="cl" style="top:349.88px">                webhooks.forEach(webhook -&gt; webhook.delete().reason(<span class="s">"Purging orphaned webhook"</span>).queue())<span class="k">;</span></div>
<div class="cl" style="top:365.81px">                webhooks.clear()<span class="k">;</span></div>
<div class="cl" style="top:397.69px">                <span class="k">if</span> (!channel.getGuild().getMember(channel.getJDA().getSelfUser()).hasPermission(Permission.<span class="fi">MANAGE_WEBHOOKS</span>)) {</div>
<div class="cl" style="top:413.62px">                    DiscordSRV.error(<span class="s">"Can't create a webhook to deliver chat message, bot is missing permission \"Manage Webhooks\""</span>)<span class="k">;</span></div>
<div class="cl" style="top:429.56px">                    <span class="k">return null;</span></div>
<div class="cl" style="top:445.50px">                }</div>
<div class="cl" style="top:477.38px">                <span class="c">// create webhooks to use</span></div>
<div class="cl" style="top:493.31px">                Webhook webhook1 = <span class="it">createWebhook</span>(channel.getGuild()<span class="k">,</span> channel<span class="k">,</span> <span class="hint">name:</span><span class="s">"DiscordSRV #"</span> + channel.getName() + <span class="s">" #1"</span>)<span class="k">;</span></div>
<div class="cl" style="top:509.25px">                Webhook <span class="hw">webhook2</span> = <span class="it">createWebhook</span>(channel.getGuild()<span class="k">,</span> channel<span class="k">,</span> <span class="hint">name:</span><span class="s">"DiscordSRV #"</span> + channel.getName() + <span class="s">" #2"</span>)<span class="k">;</span></div>
<div class="cl" style="top:541.12px">                <span class="k">if</span> (webhook1 == <span class="k">null</span> || <span class="hr">webhook2</span> == <span class="k">null</span>) <span class="k">return null;</span></div>
<div class="cl" style="top:573.00px">                webhooks.add(webhook1)<span class="k">;</span></div>
<div class="cl" style="top:588.94px">                webhooks.add(<span class="caret"></span>)<span class="k">;</span></div>
<div class="cl" style="top:604.88px">            }</div>
<div class="cl" style="top:636.75px">            LastWebhookInfo info = <span class="fi">lastUsedWebhooks</span>.get(channel)<span class="k">;</span></div>
<div class="cl" style="top:652.69px">            Webhook target<span class="k">;</span></div>
<div class="cl" style="top:684.56px">            <span class="k">if</span> (info == <span class="k">null</span>) {</div>
<div class="cl" style="top:700.50px">                target = webhooks.get(<span class="n">0</span>)<span class="k">;</span></div>
<div class="cl" style="top:716.44px">                <span class="fi">lastUsedWebhooks</span>.put(channel<span class="k">,</span> <span class="k">new</span> LastWebhookInfo(webhooks.get(<span class="n">0</span>).getId()<span class="k">,</span> targetName))<span class="k">;</span></div>
<div class="cl" style="top:732.38px">                <span class="k">return</span> target<span class="k">;</span></div>
<div class="cl" style="top:748.31px">            }</div>
<div class="cl" style="top:780.19px">            target = info.<span class="f">targetName</span>.equals(targetName)</div>
<div class="cl" style="top:796.12px">                    ? webhooks.get(<span class="n">0</span>).getId().equals(info.<span class="f">webhook</span>)</div>
<div class="cl" style="top:812.06px">                        ? webhooks.get(<span class="n">0</span>)</div>
<div class="cl" style="top:828.00px">                        : webhooks.get(<span class="n">1</span>)</div>
<div class="cl" style="top:843.94px">                    : webhooks.get(<span class="n">0</span>).getId().equals(info.<span class="f">webhook</span>)</div>
<div class="cl" style="top:859.88px">                        ? webhooks.get(<span class="n">0</span>)</div>
<div class="cl" style="top:875.81px">                        : webhooks.get(<span class="n">1</span>)</div>
<div class="cl" style="top:891.75px">            <span class="k">;</span></div>
<div style="left:566px;top:604px;width:472px;height:205px;background:#393b3d;border:1px solid #5f6265;overflow:hidden"></div>
<div style="left:567px;top:605px;width:460px;height:188px;overflow:hidden">
<svg class="ic" style="left:3px;top:3.8px" width="14" height="14"><circle cx="7" cy="7" r="6.5" fill="#b3853a"/><text x="7" y="10.5" text-anchor="middle" font-family="Liberation Sans" font-size="10" fill="#3a2f1c">v</text></svg>
<div style="left:23px;top:8.8px;width:4px;height:4px;border-radius:2px;background:#63666a"></div>
<span class="pt" style="left:34px;top:1.8px">webhook1</span>
<span class="pt" style="right:11px;top:1.8px;text-align:right">Webhook</span>
<div style="left:0;top:19.6px;width:456px;height:18px;background:#0d4a8c"></div>
<svg class="ic" style="left:3px;top:21.6px" width="14" height="14"><circle cx="7" cy="7" r="6.5" fill="#8c8468"/><text x="7" y="10.5" text-anchor="middle" font-family="Liberation Sans" font-size="10" fill="#3a2f1c">v</text></svg>
<div style="left:23px;top:26.6px;width:4px;height:4px;border-radius:2px;background:#63666a"></div>
<span class="pt" style="left:34px;top:19.6px">webhook2</span>
<span class="pt" style="right:11px;top:19.6px;text-align:right">Webhook</span>
<svg class="ic" style="left:3px;top:39.4px" width="14" height="14"><circle cx="7" cy="7" r="6.5" fill="#b3853a"/><text x="7" y="10.5" text-anchor="middle" font-family="Liberation Sans" font-size="10" fill="#3a2f1c">p</text></svg>
<div style="left:23px;top:44.4px;width:4px;height:4px;border-radius:2px;background:#63666a"></div>
<span class="pt" style="left:34px;top:37.4px">channel</span>
<span class="pt" style="right:11px;top:37.4px;text-align:right">TextChannel</span>
<svg class="ic" style="left:3px;top:57.2px" width="14" height="14"><circle cx="7" cy="7" r="6.5" fill="#b3853a"/><text x="7" y="10.5" text-anchor="middle" font-family="Liberation Sans" font-size="10" fill="#3a2f1c">p</text></svg>
<div style="left:23px;top:62.2px;width:4px;height:4px;border-radius:2px;background:#63666a"></div>
<span class="pt" style="left:34px;top:55.2px">targetName</span>
<span class="pt" style="right:11px;top:55.2px;text-align:right">String</span>
<svg class="ic" style="left:3px;top:75.0px" width="14" height="14"><circle cx="7" cy="7" r="6.5" fill="#b3853a"/><text x="7" y="10.5" text-anchor="middle" font-family="Liberation Sans" font-size="10" fill="#3a2f1c">v</text></svg>
<div style="left:23px;top:80.0px;width:4px;height:4px;border-radius:2px;background:#63666a"></div>
<span class="pt" style="left:34px;top:73.0px">webhooks</span>
<span class="pt" style="right:11px;top:73.0px;text-align:right">List&lt;Webhook&gt;</span>
<svg class="ic" style="left:3px;top:92.8px" width="14" height="14"><circle cx="7" cy="7" r="6.5" fill="#3585a8"/><path d="M9.2,5 A3,3 0 1 0 9.2,9" fill="none" stroke="#1f3440" stroke-width="1.6"/></svg>
<svg class="ic" style="left:20px;top:95.8px" width="10" height="9"><rect x="3" y="4" width="6" height="4.5" fill="#3f8a3c"/><path d="M1.5,4 L1.5,2.5 A1.8,1.8 0 0 1 5,2" fill="none" stroke="#3f8a3c" stroke-width="1.1"/></svg>
<span class="pt" style="left:34px;top:90.8px">Object<span style="color:#5d5f61"> (java.lang)</span></span>
<svg class="ic" style="left:3px;top:110.7px" width="14" height="14"><circle cx="7" cy="7" r="6.5" fill="#3585a8"/><path d="M9.2,5 A3,3 0 1 0 9.2,9" fill="none" stroke="#1f3440" stroke-width="1.6"/></svg>
<svg class="ic" style="left:20px;top:113.7px" width="10" height="9"><rect x="3" y="4" width="6" height="4.5" fill="#3f8a3c"/><path d="M1.5,4 L1.5,2.5 A1.8,1.8 0 0 1 5,2" fill="none" stroke="#3f8a3c" stroke-width="1.1"/></svg>
<span class="pt" style="left:34px;top:108.7px">String<span style="color:#5d5f61"> (java.lang)</span></span>
<svg class="ic" style="left:3px;top:128.5px" width="14" height="14"><circle cx="7" cy="7" r="6.5" fill="#3585a8"/><path d="M9.2,5 A3,3 0 1 0 9.2,9" fill="none" stroke="#1f3440" stroke-width="1.6"/></svg>
<svg class="ic" style="left:20px;top:131.5px" width="10" height="9"><rect x="3" y="4" width="6" height="4.5" fill="#3f8a3c"/><path d="M1.5,4 L1.5,2.5 A1.8,1.8 0 0 1 5,2" fill="none" stroke="#3f8a3c" stroke-width="1.1"/></svg>
<span class="pt" style="left:34px;top:126.5px">IllegalArgumentException<span style="color:#5d5f61"> (java.lang)</span></span>
<svg class="ic" style="left:3px;top:146.3px" width="14" height="14"><circle cx="7" cy="7" r="6.5" fill="#3585a8"/><path d="M9.2,5 A3,3 0 1 0 9.2,9" fill="none" stroke="#1f3440" stroke-width="1.6"/></svg>
<svg class="ic" style="left:20px;top:149.3px" width="10" height="9"><rect x="3" y="4" width="6" height="4.5" fill="#3f8a3c"/><path d="M1.5,4 L1.5,2.5 A1.8,1.8 0 0 1 5,2" fill="none" stroke="#3f8a3c" stroke-width="1.1"/></svg>
<span class="pt" style="left:34px;top:144.3px">NullPointerException<span style="color:#5d5f61"> (java.lang)</span></span>
<svg class="ic" style="left:3px;top:164.1px" width="14" height="14"><circle cx="7" cy="7" r="6.5" fill="#4a9a42"/><text x="7" y="10.5" text-anchor="middle" font-family="Liberation Sans" font-size="10" fill="#1f3440">I</text></svg>
<svg class="ic" style="left:20px;top:167.1px" width="10" height="9"><rect x="3" y="4" width="6" height="4.5" fill="#3f8a3c"/><path d="M1.5,4 L1.5,2.5 A1.8,1.8 0 0 1 5,2" fill="none" stroke="#3f8a3c" stroke-width="1.1"/></svg>
<span class="pt" style="left:34px;top:162.1px">List<span style="color:#5a5c5e">&lt;E&gt;</span><span style="color:#5d5f61"> (java.util)</span></span>
<svg class="ic" style="left:3px;top:181.9px" width="14" height="14"><circle cx="7" cy="7" r="6.5" fill="#3585a8"/><path d="M9.2,5 A3,3 0 1 0 9.2,9" fill="none" stroke="#1f3440" stroke-width="1.6"/></svg>
<svg class="ic" style="left:20px;top:184.9px" width="10" height="9"><rect x="3" y="4" width="6" height="4.5" fill="#3f8a3c"/><path d="M1.5,4 L1.5,2.5 A1.8,1.8 0 0 1 5,2" fill="none" stroke="#3f8a3c" stroke-width="1.1"/></svg>
<span class="pt" style="left:34px;top:179.9px">System<span style="color:#5d5f61"> (java.lang)</span></span>
</div>
<div style="left:1027px;top:606px;width:7px;height:26px;background:#505255;border-radius:1px"></div>
<div style="left:567px;top:793px;width:470px;height:15px;background:#393b3d"></div>
<span class="foot" style="left:569px;top:794px">Press Ctrl+Shift+Space to show only variants that are suitable by type</span>
<svg class="ic" style="left:1023px;top:795px" width="10" height="10" viewBox="0 0 10 10"><path d="M1,2 L9,2 M3,2 L3,9 M7,2 L7,9" stroke="#3b86b4" stroke-width="1.3"/></svg>
<div style="left:1040px;top:605px;width:419px;height:161px;background:#434547;border:1px solid #5d6063"></div>
<div style="left:1041px;top:606px;width:417px;height:22px;background:#4a4c4e"></div>
<span class="dt" style="left:1041px;width:397px;top:606px;text-align:center;font-size:10.5px">Documentation for webhook2</span>
<svg class="ic" style="left:1440px;top:610px" width="12" height="12" viewBox="0 0 12 12"><path d="M2,10 L6,6 M5,3 L9,7 M6,2 L10,6" stroke="#6c6f72" stroke-width="1.3"/></svg>
<div style="left:1041px;top:628px;width:417px;height:29px;background:#393b3d"></div>
<svg class="ic" style="left:1046px;top:635px" width="14" height="14" viewBox="0 0 14 14"><path d="M1,7 L6,2 L6,5 L12,5 L12,9 L6,9 L6,12 Z" fill="none" stroke="#3d92c4" stroke-width="1.6"/></svg>
<svg class="ic" style="left:1070px;top:635px" width="14" height="14" viewBox="0 0 14 14"><path d="M13,7 L8,2 L8,5 L2,5 L2,9 L8,9 L8,12 Z" fill="none" stroke="#55585b" stroke-width="1.4"/></svg>
<svg class="ic" style="left:1094px;top:634px" width="12" height="14" viewBox="0 0 12 14"><path d="M6,1 L1,6 L4,6 L4,13 L8,13 L8,6 L11,6 Z" fill="#55585b"/></svg>
<svg class="ic" style="left:1117px;top:634px" width="15" height="15" viewBox="0 0 15 15"><path d="M1,1 L9,1 L9,13 L1,13 Z" fill="none" stroke="#8a8d90" stroke-width="1.2"/><path d="M5,12 L13,4" stroke="#5aa846" stroke-width="2.4"/><path d="M4,13 L6,11" stroke="#e0a040" stroke-width="2"/></svg>
<svg class="ic" style="left:1155px;top:636px" width="14" height="11" viewBox="0 0 14 11"><path d="M0.5,1 L5,1 L6.5,2.5 L13.5,2.5 L13.5,10.5 L0.5,10.5 Z" fill="#6d737a"/></svg>
<div style="left:1162px;top:643px;width:6px;height:6px;background:#2e8fc0"></div>
<span class="tr" style="left:1172px;top:633px;color:#999c9f">DiscordSRV</span>
<svg class="ic" style="left:1436px;top:634px" width="14" height="14" viewBox="0 0 14 14"><polygon points="13.00,7.00 10.99,8.65 11.24,11.24 8.65,10.99 7.00,13.00 5.35,10.99 2.76,11.24 3.01,8.65 1.00,7.00 3.01,5.35 2.76,2.76 5.35,3.01 7.00,1.00 8.65,3.01 11.24,2.76 10.99,5.35" fill="#3d92c4" stroke="#3d92c4" stroke-width="1.2" stroke-linejoin="round"/><circle cx="7" cy="7" r="2.10" fill="#393b3d"/></svg>
<div class="cl" style="left:1045px;top:667px;color:#a3a6a9"><span style="color:#5a8fcb;text-decoration:underline">Webhook</span> webhook2 = createWebhook(channel.getGuild(), channel, '</div>
<div style="left:1041px;top:754px;width:417px;height:10px;background:#45474a"></div>
<div style="left:1042px;top:755px;width:245px;height:7px;background:#555759"></div>
<div style="left:1656px;top:400px;width:8px;height:347px;background:#464749;border-radius:2px"></div>
<div style="left:1652px;top:413px;width:13px;height:2px;background:#b4892f"></div>
<div style="left:1652px;top:459px;width:13px;height:2px;background:#b4892f"></div>
<div style="left:1652px;top:465px;width:13px;height:2px;background:#b4892f"></div>
<div style="left:1652px;top:583px;width:13px;height:2px;background:#c47088"></div>
<div style="left:1652px;top:596px;width:13px;height:2px;background:#227022"></div>
<div style="left:1652px;top:616px;width:13px;height:2px;background:#227022"></div>
<div style="left:1652px;top:793px;width:13px;height:2px;background:#b4892f"></div>
<div style="left:1648px;top:616px;width:1px;height:7px;background:#3a6aa0"></div>
<div style="left:1654px;top:66px;width:2px;height:9px;background:#6d7073"></div><div style="left:1658px;top:66px;width:2px;height:9px;background:#6d7073"></div>
<svg class="ic" style="left:984px;top:560px" width="10" height="19" viewBox="0 0 10 19"><path d="M1,1 L9,1 M5,1 L5,18 M1,18 L9,18" stroke="#c8c8c8" stroke-width="1.2"/></svg>
<div id="maven"></div>
<div style="left:1666px;top:41px;width:134px;height:22px;background:#2e3032;border-bottom:1px solid #28292b"></div>
<span class="tr" style="left:1671px;top:42px;color:#7f8285;font-size:11px">Maven Projects</span>
<svg class="ic" style="left:1754.5px;top:44.5px" width="13.0" height="13.0" viewBox="0 0 13.0 13.0"><polygon points="12.00,6.50 10.16,8.02 10.39,10.39 8.02,10.16 6.50,12.00 4.98,10.16 2.61,10.39 2.84,8.02 1.00,6.50 2.84,4.98 2.61,2.61 4.98,2.84 6.50,1.00 8.02,2.84 10.39,2.61 10.16,4.98" fill="#7d8083" stroke="#7d8083" stroke-width="1.2" stroke-linejoin="round"/><circle cx="6.5" cy="6.5" r="1.92" fill="#2e3032"/></svg>
<svg class="ic" style="left:1768px;top:49px" width="6" height="5" viewBox="0 0 6 5"><path d="M0,0 L6,0 L3,4Z" fill="#7d8083"/></svg>
<svg class="ic" style="left:1777px;top:44px" width="13" height="13" viewBox="0 0 13 13"><path d="M1,6 L8,6 M5,3 L8,6 L5,9" fill="none" stroke="#7d8083" stroke-width="1.3"/><rect x="10" y="1" width="2" height="11" fill="#7d8083"/></svg>
<div style="left:1666px;top:63px;width:134px;height:27px;background:#333537"></div>
<svg class="ic" style="left:1671px;top:68px" width="16" height="16" viewBox="0 0 16 16"><path d="M3,9 A5.5,5.5 0 0 1 12,3.5 M13,7 A5.5,5.5 0 0 1 4,12.5" fill="none" stroke="#3d8fc0" stroke-width="1.8"/><path d="M10,1 L13,4 L9.5,5.5 Z M6,14.5 L3,12 L6.5,10.5Z" fill="#3d8fc0"/></svg>
<svg class="ic" style="left:1695px;top:70px" width="15" height="14" viewBox="0 0 15 14"><path d="M1,1 L6,1 L7,2.5 L11,2.5 L11,11 L1,11 Z" fill="#6d737a"/><circle cx="10.5" cy="10" r="3.6" fill="#2f86b4"/></svg>
<svg class="ic" style="left:1718px;top:67px" width="16" height="16" viewBox="0 0 16 16"><path d="M8,1 L8,7 M5,4.5 L8,7.5 L11,4.5" fill="none" stroke="#2f9bd0" stroke-width="2.2"/><rect x="1" y="10" width="11" height="3" fill="#6d737a"/><path d="M11,12 L15,12 L13,15Z" fill="#8a8d90"/></svg>
<div style="left:1741px;top:66px;width:1px;height:21px;background:#3e4042"></div>
<svg class="ic" style="left:1747px;top:69px" width="14" height="14" viewBox="0 0 14 14"><path d="M7,1 L7,13 M1,7 L13,7" stroke="#3e9a3e" stroke-width="2.2"/></svg>
<div style="left:1770px;top:66px;width:1px;height:21px;background:#3e4042"></div>
<svg class="ic" style="left:1786px;top:72px" width="9" height="8" viewBox="0 0 9 8"><path d="M1,1 L4,4 L1,7 M5,1 L8,4 L5,7" fill="none" stroke="#7d8083" stroke-width="1.2"/></svg>
<div style="left:1666px;top:90px;width:134px;height:19px;background:#0d283b"></div>
<svg class="ic" style="left:1668px;top:96px" width="10" height="8" viewBox="0 0 10 8"><path d="M0.5,1 L9.5,1 L5,7.5 Z" fill="#8a8c8e"/></svg>
<svg class="ic" style="left:1688px;top:92px" width="16" height="16" viewBox="0 0 16 16"><path d="M3,1 L9,1 L9,12 L3,12 Z M1,3 L1,14" fill="#6d737a" stroke="#6d737a" stroke-width="1"/><rect x="7" y="9" width="8" height="6" fill="#2d8bb8"/></svg>
<span class="tr" style="left:1704px;top:90.5px;color:#9da0a3">DiscordSRV</span>
<svg class="ic" style="left:1687px;top:115px" width="10" height="8" viewBox="0 0 10 8"><path d="M0.5,1 L9.5,1 L5,7.5 Z" fill="#8a8c8e"/></svg>
<svg class="ic" style="left:1706px;top:113px" width="14" height="11" viewBox="0 0 14 11"><path d="M0.5,1 L5,1 L6.5,2.5 L13.5,2.5 L13.5,10.5 L0.5,10.5 Z" fill="#6d737a"/></svg>
<div style="left:1713px;top:118px;width:8px;height:8px;border-radius:4px;background:#2d8bb8"></div>
<span class="tr" style="left:1723px;top:109.5px">Lifecycle</span>
<svg class="ic" style="left:1724px;top:131.0px" width="14" height="14" viewBox="0 0 14 14"><polygon points="13.00,7.00 10.99,8.65 11.24,11.24 8.65,10.99 7.00,13.00 5.35,10.99 2.76,11.24 3.01,8.65 1.00,7.00 3.01,5.35 2.76,2.76 5.35,3.01 7.00,1.00 8.65,3.01 11.24,2.76 10.99,5.35" fill="#347d9e" stroke="#347d9e" stroke-width="1.2" stroke-linejoin="round"/><circle cx="7" cy="7" r="2.10" fill="#323436"/></svg>
<span class="tr" style="left:1742px;top:128.5px">clean</span>
<svg class="ic" style="left:1724px;top:149.75px" width="14" height="14" viewBox="0 0 14 14"><polygon points="13.00,7.00 10.99,8.65 11.24,11.24 8.65,10.99 7.00,13.00 5.35,10.99 2.76,11.24 3.01,8.65 1.00,7.00 3.01,5.35 2.76,2.76 5.35,3.01 7.00,1.00 8.65,3.01 11.24,2.76 10.99,5.35" fill="#347d9e" stroke="#347d9e" stroke-width="1.2" stroke-linejoin="round"/><circle cx="7" cy="7" r="2.10" fill="#323436"/></svg>
<span class="tr" style="left:1742px;top:147.2px">validate</span>
<svg class="ic" style="left:1724px;top:168.5px" width="14" height="14" viewBox="0 0 14 14"><polygon points="13.00,7.00 10.99,8.65 11.24,11.24 8.65,10.99 7.00,13.00 5.35,10.99 2.76,11.24 3.01,8.65 1.00,7.00 3.01,5.35 2.76,2.76 5.35,3.01 7.00,1.00 8.65,3.01 11.24,2.76 10.99,5.35" fill="#347d9e" stroke="#347d9e" stroke-width="1.2" stroke-linejoin="round"/><circle cx="7" cy="7" r="2.10" fill="#323436"/></svg>
<span class="tr" style="left:1742px;top:166.0px">compile</span>
<svg class="ic" style="left:1724px;top:187.25px" width="14" height="14" viewBox="0 0 14 14"><polygon points="13.00,7.00 10.99,8.65 11.24,11.24 8.65,10.99 7.00,13.00 5.35,10.99 2.76,11.24 3.01,8.65 1.00,7.00 3.01,5.35 2.76,2.76 5.35,3.01 7.00,1.00 8.65,3.01 11.24,2.76 10.99,5.35" fill="#347d9e" stroke="#347d9e" stroke-width="1.2" stroke-linejoin="round"/><circle cx="7" cy="7" r="2.10" fill="#323436"/></svg>
<span class="tr" style="left:1742px;top:184.8px">test</span>
<svg class="ic" style="left:1724px;top:206.0px" width="14" height="14" viewBox="0 0 14 14"><polygon points="13.00,7.00 10.99,8.65 11.24,11.24 8.65,10.99 7.00,13.00 5.35,10.99 2.76,11.24 3.01,8.65 1.00,7.00 3.01,5.35 2.76,2.76 5.35,3.01 7.00,1.00 8.65,3.01 11.24,2.76 10.99,5.35" fill="#347d9e" stroke="#347d9e" stroke-width="1.2" stroke-linejoin="round"/><circle cx="7" cy="7" r="2.10" fill="#323436"/></svg>
<span class="tr" style="left:1742px;top:203.5px">package</span>
<svg class="ic" style="left:1724px;top:224.75px" width="14" height="14" viewBox="0 0 14 14"><polygon points="13.00,7.00 10.99,8.65 11.24,11.24 8.65,10.99 7.00,13.00 5.35,10.99 2.76,11.24 3.01,8.65 1.00,7.00 3.01,5.35 2.76,2.76 5.35,3.01 7.00,1.00 8.65,3.01 11.24,2.76 10.99,5.35" fill="#347d9e" stroke="#347d9e" stroke-width="1.2" stroke-linejoin="round"/><circle cx="7" cy="7" r="2.10" fill="#323436"/></svg>
<span class="tr" style="left:1742px;top:222.2px">verify</span>
<svg class="ic" style="left:1724px;top:243.5px" width="14" height="14" viewBox="0 0 14 14"><polygon points="13.00,7.00 10.99,8.65 11.24,11.24 8.65,10.99 7.00,13.00 5.35,10.99 2.76,11.24 3.01,8.65 1.00,7.00 3.01,5.35 2.76,2.76 5.35,3.01 7.00,1.00 8.65,3.01 11.24,2.76 10.99,5.35" fill="#347d9e" stroke="#347d9e" stroke-width="1.2" stroke-linejoin="round"/><circle cx="7" cy="7" r="2.10" fill="#323436"/></svg>
<span class="tr" style="left:1742px;top:241.0px">install</span>
<svg class="ic" style="left:1724px;top:262.25px" width="14" height="14" viewBox="0 0 14 14"><polygon points="13.00,7.00 10.99,8.65 11.24,11.24 8.65,10.99 7.00,13.00 5.35,10.99 2.76,11.24 3.01,8.65 1.00,7.00 3.01,5.35 2.76,2.76 5.35,3.01 7.00,1.00 8.65,3.01 11.24,2.76 10.99,5.35" fill="#347d9e" stroke="#347d9e" stroke-width="1.2" stroke-linejoin="round"/><circle cx="7" cy="7" r="2.10" fill="#323436"/></svg>
<span class="tr" style="left:1742px;top:259.8px">site</span>
<svg class="ic" style="left:1724px;top:281.0px" width="14" height="14" viewBox="0 0 14 14"><polygon points="13.00,7.00 10.99,8.65 11.24,11.24 8.65,10.99 7.00,13.00 5.35,10.99 2.76,11.24 3.01,8.65 1.00,7.00 3.01,5.35 2.76,2.76 5.35,3.01 7.00,1.00 8.65,3.01 11.24,2.76 10.99,5.35" fill="#347d9e" stroke="#347d9e" stroke-width="1.2" stroke-linejoin="round"/><circle cx="7" cy="7" r="2.10" fill="#323436"/></svg>
<span class="tr" style="left:1742px;top:278.5px">deploy</span>
<svg class="ic" style="left:1688px;top:302.0px" width="8" height="10" viewBox="0 0 8 10"><path d="M1,0.5 L7.5,5 L1,9.5 Z" fill="#8a8c8e"/></svg>
<svg class="ic" style="left:1706px;top:301.0px" width="14" height="11" viewBox="0 0 14 11"><path d="M0.5,1 L5,1 L6.5,2.5 L13.5,2.5 L13.5,10.5 L0.5,10.5 Z" fill="#6d737a"/></svg>
<div style="left:1713px;top:306px;width:8px;height:8px;border-radius:4px;background:#2d8bb8"></div>
<span class="tr" style="left:1723px;top:297.5px">Plugins</span>
<svg class="ic" style="left:1688px;top:320.75px" width="8" height="10" viewBox="0 0 8 10"><path d="M1,0.5 L7.5,5 L1,9.5 Z" fill="#8a8c8e"/></svg>
<svg class="ic" style="left:1706px;top:319.75px" width="14" height="11" viewBox="0 0 14 11"><path d="M0.5,1 L5,1 L6.5,2.5 L13.5,2.5 L13.5,10.5 L0.5,10.5 Z" fill="#6d737a"/></svg>
<div style="left:1714px;top:324px;width:6px;height:7px;background:#4a8a5a"></div>
<span class="tr" style="left:1723px;top:316.2px">Dependencies</span>
<div id="brc"></div>
<span class="tr" style="left:414px;top:913.5px;color:#8d9093;font-size:11px">WebhookUtil</span>
<svg class="ic" style="left:488px;top:918px" width="6" height="10" viewBox="0 0 6 10"><path d="M1,1 L5,5 L1,9" fill="none" stroke="#55585b" stroke-width="1"/></svg>
<span class="tr" style="left:501px;top:913.5px;color:#8d9093;font-size:11px">getWebhookToUseForChannel()</span>
<div id="status"></div>
<div style="left:9px;top:937px;width:12px;height:10px;border:1.5px solid #6d7073"></div>
<span class="tr" style="left:1530px;top:933px;color:#7c7f82;font-size:10.5px">112:20</span>
<span class="tr" style="left:1572px;top:933px;color:#7c7f82;font-size:10.5px">CRLF÷</span>
<span class="tr" style="left:1610px;top:933px;color:#7c7f82;font-size:10.5px">UTF-8÷</span>
<span class="tr" style="left:1657px;top:933px;color:#7c7f82;font-size:10.5px">Git: develop ÷</span>
<svg class="ic" style="left:1738px;top:936px" width="14" height="9" viewBox="0 0 14 9"><path d="M2,8 L7,3 L12,8" fill="none" stroke="#6d7073" stroke-width="1.4"/></svg>
<svg class="ic" style="left:1760px;top:935px" width="12" height="10" viewBox="0 0 12 10"><circle cx="6" cy="6" r="4.5" fill="none" stroke="#6d7073" stroke-width="1.2"/></svg>
<svg class="ic" style="left:1780px;top:935px" width="16" height="10" viewBox="0 0 16 10"><circle cx="8" cy="9" r="7" fill="none" stroke="#6d7073" stroke-width="1.2"/></svg>
</div>
<svg style="position:absolute;left:0;top:0" width="1800" height="945">
<defs><filter id="sb" x="-5%" y="-5%" width="110%" height="110%"><feGaussianBlur stdDeviation="0.45"/></filter>
<clipPath id="rc"><rect x="72" y="543" width="330" height="330" rx="36"/></clipPath></defs>
<path d="M146,72 C179,71 208,86 211,113 C213,135 201,150 186,154 C170,158 155,165 145,176 C136,189 128,216 108,216 C90,216 80,190 78,150 C76,110 96,72 146,72 Z" fill="#fff" stroke="#262728" stroke-width="1.6" stroke-opacity="0.7"/><path d="M146,72 C179,71 208,86 211,113 C213,135 201,150 186,154 C170,158 155,165 145,176 C136,189 128,216 108,216 C90,216 80,190 78,150 C76,110 96,72 146,72 Z" fill="#fff"/>
<rect x="71.5" y="542.5" width="331" height="331" rx="36.5" fill="#fff" stroke="#262728" stroke-width="1.2" stroke-opacity="0.8"/><rect x="72" y="543" width="330" height="330" rx="36" fill="#fff"/>
<g clip-path="url(#rc)" filter="url(#sb)" fill="none" stroke="#3a3a3a" stroke-width="1.3" stroke-linecap="round" stroke-linejoin="round">
<!-- boy -->
<path d="M186.8,711 L200,708 L203,718 L209.6,834 L204,839.7 L179,837.8 C179,800 181,760 186.8,711 Z" fill="#b8b8b8" stroke="#444"/>
<path d="M186,722 L200,712 M184,735 L202,720 M183,748 L203,733 M182,760 L204,745 M181,773 L205,757 M181,786 L205,770 M180,799 L206,782 M180,812 L207,795 M180,825 L208,808 M185,836 L209,820" stroke="#7a7a7a" stroke-width="0.8"/>
<path d="M195.3,738.7 C194,750 192.5,769 186.8,834" stroke="#2a2a2a" stroke-width="1.5"/>
<path d="M134,644.3 C145,638 152,630 160,626 C172,619 180,617 186,617 C200,617 210,620 213.4,624.6 C221,632 226,640 227.4,645 C231,655 234,665 235,673" stroke-width="1.4"/>
<path d="M134,644.3 L151.2,639.8 C146,650 143,665 142.3,679 L141,700.8 L148,681.7 L161.4,709.7 L165.2,694.4 L174,704.6"/>
<path d="M175.3,651.3 L174.1,694.4 M190.6,643.6 L179.2,672.8 M190.6,643.6 L195.7,674.1 L210.9,639.8 L218.5,669 L223.6,655 L227.4,674.1" stroke-width="1"/>
<path d="M165.2,694.4 C170,699 175,702 179.1,702 C188,704 195,704 198.2,703.3 C206,702 213,700 218.5,697 C224,693 227,689 228.7,684.3 C229,680 228,677 226.1,674.1" stroke-width="1.3"/>
<ellipse cx="188" cy="674" rx="4" ry="4.6" fill="#888" stroke="#444" stroke-width="1"/>
<ellipse cx="216.6" cy="666.5" rx="3" ry="4.5" fill="#888" stroke="#444" stroke-width="1"/>
<path d="M186,686 L190,685 M208.5,694.5 L211,693"/>
<path d="M168,702 L174,714 L178,708 L183,716 L187,710 M198,706 L206,710 L213,708"/>
<path d="M205.8,708.2 C212,722 216,732 219.1,740.6 C225,765 230,790 234.4,807.3 L236.3,818.7" stroke-width="1.4"/>
<path d="M209.6,826.3 L234.4,818.7 M179.1,841.6 L181,873 M205.8,858.7 L203,873 M212.5,853 L213.4,873 M234.4,820.6 L235.3,873"/>
<path d="M176,838 L174,848 L179,846"/>
<path d="M179,670 C183,667 189,667 193,670" stroke-width="1.8"/>
<path d="M210,662 C214,659 219,660 222,663" stroke-width="1.8"/>
<path d="M198.6,643 L196,675 M211,640 L203,672 M221,648 L230,668 M157,660 L160,690 M150,670 L146,695" stroke-width="0.9"/>
<path d="M207,710 C213,725 218,740 222,755 C227,775 232,795 236,815" stroke-width="0.9"/>
<!-- girl -->
<path d="M274.4,647.9 C279,636 283,630 289.5,624.5 C296,619 303,617.6 310.2,617.6 C318,617.6 324,619 329.4,621.8" stroke-width="1.4"/>
<path d="M340.4,628.6 C346,638 350,645 352.8,653.4 C356,665 357,673 358.3,682.3"/>
<path d="M279.9,685.1 C285,693 290,698 296.4,701.6 C304,705 312,707 319.8,707.1 C327,707 334,704 339.1,701.6 C344,698 348,693 350.1,687.8" stroke-width="1.4"/>
<path d="M274,645 C270,660 268,675 268.9,690.6 C269,710 270,725 273,743.5 C275,725 276,705 276.4,690"/>
<path d="M352,665 C353,690 352,710 351.8,736.7 C354,720 355,700 355,680"/>
<path d="M296.4,653 L300,694 M310,646 L304,677 M318.7,645 L325,677 M332,647 L330.7,675 M343,646 L347,672 M283,642 L292,670 M286,640 L297,660" stroke-width="1"/>
<ellipse cx="311.5" cy="675.4" rx="3.6" ry="5.5" fill="#777" stroke="#444" stroke-width="1"/>
<ellipse cx="341.1" cy="674" rx="3" ry="5.5" fill="#777" stroke="#444" stroke-width="1"/>
<path d="M321.2,693.3 C324,697 326,698 328.1,698.1 C331,698 333,696 334.9,692.6" stroke-width="1.3"/>
<ellipse cx="308.8" cy="690.6" rx="3.5" ry="1.6" fill="#bbb" stroke="none"/>
<ellipse cx="343.2" cy="686.4" rx="3" ry="1.5" fill="#bbb" stroke="none"/>
<path d="M317,709.8 L322.5,725 L328,709.8" stroke-width="1.2"/>
<path d="M311.1,716.4 C306,735 303,745 300.9,755.3 C298,770 296,782 295.9,792.6 L302.6,794.3 C310,780 316,768 319.6,755.3 L323,731.6"/>
<path d="M317.9,750.3 C319,740 321,733 323.8,729.9 C327,735 330,742 331.4,748.6 L326.4,753.6"/>
<path d="M333.1,716.4 C338,730 343,745 346.7,755.3 C350,768 352,776 353.4,782.4 L348.4,784.1 C340,776 334,770 329.7,763.8 L324.7,755.3"/>
<path d="M303.5,796 L301,814.6 M350.1,784.1 L355.1,814.6"/>
<path d="M300.1,814.6 L356.8,814.6 L358.5,831.5 L300.1,834.1 Z" stroke-width="1.2"/>
<path d="M302,820 L315,833 M310,815 L330,832 M322,816 L340,832 M300,830 L318,815 M315,832 L335,815 M332,832 L350,815 M345,832 L357,820 M340,815 L357,830" stroke-width="0.9"/>
<path d="M305,670 C309,666 315,666 318,670" stroke-width="1.8"/>
<path d="M337,668 C340,665 344,665 346,668" stroke-width="1.8"/>
<path d="M276,650 L284,688 M279,646 L290,675 M282,640 L294,668 M288,632 L300,662 M346,640 L354,676 M350,646 L357,685" stroke-width="0.9"/>
<path d="M283,676 C280,680 281,687 286,690" stroke-width="1"/>
<path d="M300,816 L310,834 M306,815 L318,833 M326,815 L314,834 M345,815 L330,834 M349,833 L357,818 M334,815 L352,833" stroke-width="0.9"/>
<path d="M320,712 L322.5,720 L325,712" stroke-width="1.6"/>
<path d="M303.5,835 L306.9,873 M320.4,835 L321.3,873 M334.8,835 L337.4,873 M353.4,833.2 L354.3,873"/>
</g>
</svg>

</body></html>
